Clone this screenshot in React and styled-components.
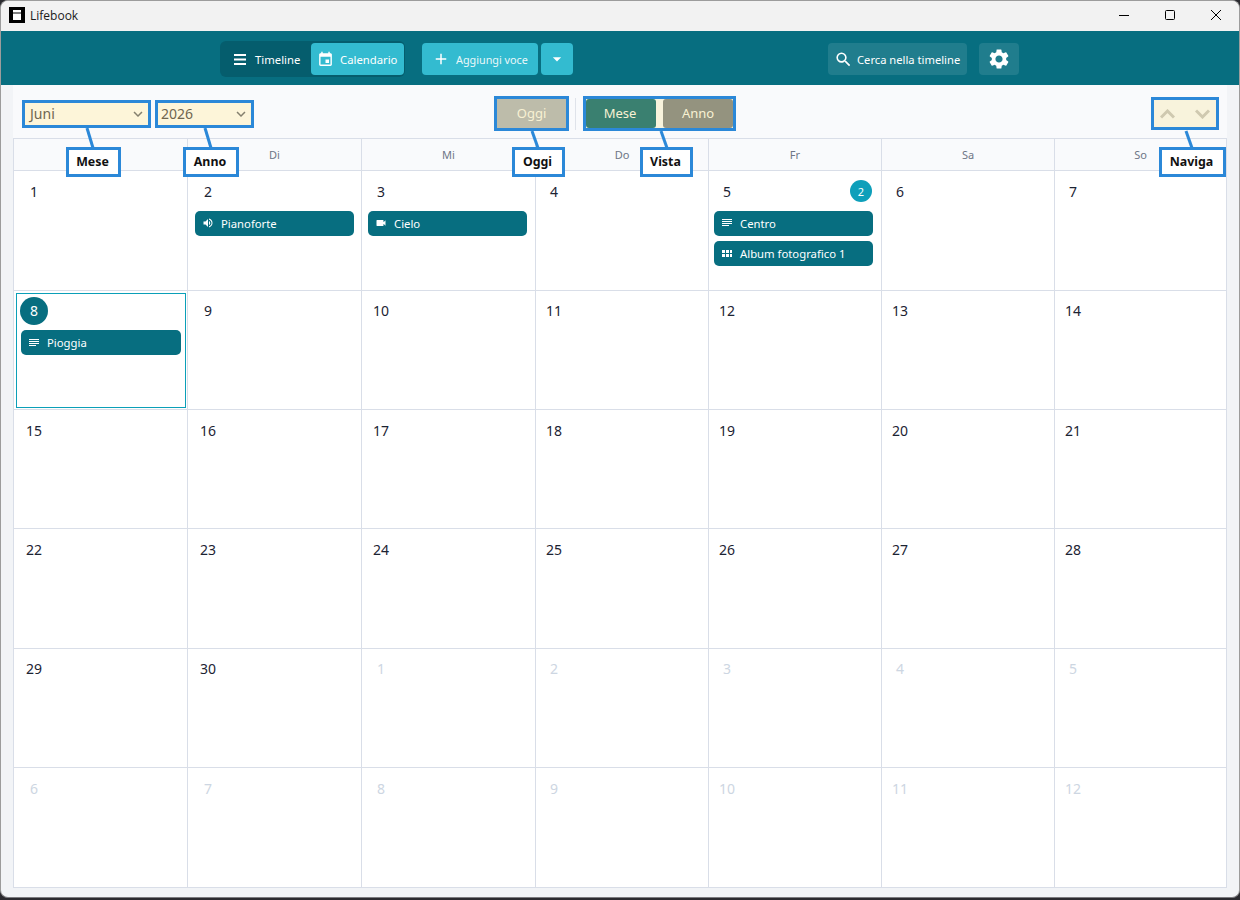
import React from "react";
import styled, { createGlobalStyle, css } from "styled-components";
import {
  MdEvent, MdAdd, MdArrowDropDown, MdSearch, MdSettings, MdVolumeUp,
  MdVideocam, MdExpandMore,
} from "react-icons/md";

const Global = createGlobalStyle`
  html, body { margin: 0; padding: 0; background: #2b2b30; }
  * { box-sizing: border-box; }
  body { font-family: "Noto Sans", "Open Sans", sans-serif; }
`;

const Window = styled.div`
  position: relative;
  width: 1240px;
  height: 898px;
  display: flex;
  flex-direction: column;
  overflow: hidden;
  border: 1px solid #9c9c9c;
  border-bottom-color: #7c7c80;
  border-radius: 8px;
  background: #f2f4f7;
`;

const TitleBar = styled.div`
  height: 30px;
  flex: none;
  display: flex;
  align-items: center;
  background: #f2f2f2;
  padding: 0 0 2px 8px;
`;
const AppLogo = styled.svg`
  width: 16px;
  height: 16px;
  margin-right: 5px;
  flex: none;
`;
const AppName = styled.span`
  font: 12px "Open Sans", sans-serif;
  color: #1a1a1a;
`;
const WinControls = styled.div`
  margin-left: auto;
  display: flex;
`;
const WinButton = styled.div`
  width: 46px;
  height: 28px;
  display: flex;
  align-items: center;
  justify-content: center;
  svg { width: 10px; height: 10px; }
`;

const Header = styled.header`
  height: 54px;
  flex: none;
  background: #076e80;
  padding: 2px 220px 0 219px;
  display: flex;
  align-items: center;
  justify-content: space-between;
`;
const Cluster = styled.div`
  display: flex;
  align-items: center;
`;
const NavGroup = styled.div`
  height: 36px;
  width: 185px;
  padding: 2px 1px 2px 3px;
  background: #055d6d;
  border-radius: 6px;
  display: flex;
  margin-right: 17px;
`;
const HeadButton = styled.div`
  height: 32px;
  border-radius: 4px;
  display: flex;
  align-items: center;
  color: #fff;
  font-size: ${(p) => p.$fs || 11.3}px;
  white-space: nowrap;
  ${(p) => p.$w && css`width: ${p.$w}px;`}
  padding-left: ${(p) => p.$pl || 0}px;
  gap: ${(p) => p.$gap || 0}px;
  background: ${(p) => (p.$kind === "accent" ? "#33bbd0" : p.$kind === "soft" ? "#207d8d" : "transparent")};
  justify-content: ${(p) => (p.$center ? "center" : "flex-start")};
  margin-left: ${(p) => p.$ml || 0}px;
`;
const AddLabel = styled.span`
  opacity: 0.9;
`;
const BarsIcon = styled.svg`
  width: 12px;
  height: 11px;
  flex: none;
`;

const Main = styled.main`
  flex: 1;
  min-height: 0;
  padding: 0 12px 9.3px;
  display: flex;
  flex-direction: column;
`;
const Toolbar = styled.div`
  height: 53px;
  flex: none;
  background: #f9fafc;
  display: flex;
  align-items: flex-start;
  padding: 14px 11px 0 12px;
`;
const Marked = css`
  outline: 3px solid #2b88d8;
  outline-offset: 0;
`;
const SelectBox = styled.div`
  ${Marked}
  height: 22px;
  margin-top: 4px;
  width: ${(p) => p.$w}px;
  background: #fdf5d9;
  color: #6f6550;
  font-size: 14px;
  padding: 0 1px 2px ${(p) => p.$pl}px;
  display: flex;
  align-items: center;
  justify-content: space-between;
  margin-right: ${(p) => p.$mr || 0}px;
  svg { color: #85806e; margin-top: 2px; }
`;
const TodayButton = styled.div`
  ${Marked}
  width: 69px;
  height: 29px;
  margin-left: 246px;
  padding-bottom: 2px;
  background: #bdbcaa;
  color: #f8f1d3;
  font-size: 13px;
  display: flex;
  align-items: center;
  justify-content: center;
`;
const Divider = styled.div`
  width: 1px;
  height: 32px;
  background: #dfe3ea;
  margin: -1px 10px 0 9px;
`;
const ViewSwitch = styled.div`
  ${Marked}
  width: 147px;
  height: 29px;
  display: flex;
  justify-content: space-between;
  background: #f8f3dc;
`;
const ViewButton = styled.div`
  width: 70px;
  padding-bottom: 2px;
  padding-right: ${(p) => (p.$active ? 2 : 0)}px;
  display: flex;
  align-items: center;
  justify-content: center;
  font-size: 13px;
  color: #f8f1d3;
  border-radius: 3px;
  background: ${(p) => (p.$active ? "#3a8070" : "#94937f")};
`;
const NavArrows = styled.div`
  ${Marked}
  margin-left: auto;
  width: 62px;
  height: 27px;
  margin-top: 1px;
  background: #f8f3dc;
  color: #cfc9b0;
  display: flex;
  align-items: center;
  justify-content: space-between;
  padding: 0 6px;
`;
const Chevron = styled.svg`
  width: 15px;
  height: 10px;
  fill: none;
  stroke: currentColor;
  stroke-width: 3;
`;

const columns = "174px 174px 174px 173px 173px 173px 172px";

const Calendar = styled.div`
  flex: 1;
  min-height: 0;
  background: #fff;
  display: flex;
  flex-direction: column;
  border-left: 1px solid #d9dee8;
  border-top: 1px solid #d9dee8;
`;
const HeadRow = styled.div`
  height: 32.3px;
  flex: none;
  display: grid;
  grid-template-columns: ${columns};
  background: #f9fafc;
`;
const HeadCell = styled.div`
  display: flex;
  align-items: center;
  justify-content: center;
  font-size: 11px;
  color: #6e7686;
  border-right: 1px solid #d9dee8;
  border-bottom: 1px solid #d9dee8;
`;
const Weeks = styled.div`
  flex: 1;
  min-height: 0;
  display: grid;
  grid-template-columns: ${columns};
  grid-template-rows: repeat(6, 1fr);
`;
const Day = styled.div`
  min-width: 0;
  border-right: 1px solid #d9dee8;
  border-bottom: 1px solid #d9dee8;
  padding: 6px 0 0 ${(p) => p.$inset}px;
  ${(p) => p.$today && css`
    outline: 1px solid #0b9fb8;
    outline-offset: -3px;
  `}
`;
const DayTop = styled.div`
  width: 159px;
  height: 28px;
  display: flex;
  justify-content: space-between;
  align-items: center;
  margin-bottom: 5.6px;
`;
const DayNum = styled.div`
  width: 28px;
  height: 28px;
  border-radius: 50%;
  display: flex;
  align-items: center;
  justify-content: center;
  font-size: 14px;
  color: ${(p) => (p.$muted ? "#cdd6e2" : p.$today ? "#fff" : "#1c2333")};
  background: ${(p) => (p.$today ? "#076e80" : "transparent")};
`;
const CountBadge = styled.div`
  width: 22px;
  height: 22px;
  border-radius: 50%;
  background: #0e9fba;
  color: #fff;
  font-size: 11px;
  display: flex;
  align-items: center;
  justify-content: center;
`;
const EventChip = styled.div`
  height: 25px;
  width: ${(p) => (p.$today ? 160 : 159)}px;
  margin: 0 0 5px 1px;
  padding-left: 7px;
  border-radius: 5px;
  background: #076e80;
  color: #fff;
  font-size: 11.3px;
  display: flex;
  align-items: center;
  gap: 7px;
  white-space: nowrap;
  svg { flex: none; }
`;
const ChipIcon = styled.svg`
  width: 12px;
  height: 12px;
  fill: currentColor;
  shape-rendering: crispEdges;
`;

const Callout = styled.div`
  position: absolute;
  top: 146px;
  left: ${(p) => p.$x}px;
  width: ${(p) => p.$w}px;
  height: 30px;
  padding: 0 2px 1px 0;
  background: #fff;
  border: 3px solid #2b88d8;
  font-size: 12.4px;
  font-weight: 700;
  color: #111;
  display: flex;
  align-items: center;
  justify-content: center;
`;
const Leaders = styled.svg`
  position: absolute;
  left: 0;
  top: 0;
  width: 1240px;
  height: 200px;
  pointer-events: none;
`;

const SubjectIcon = () => (
  <ChipIcon viewBox="0 0 12 12">
    <path d="M1 2h10v1H1zM1 4h10v1H1zM1 6h10v1H1zM1 8h7v1H1z" />
  </ChipIcon>
);
const AlbumIcon = () => (
  <ChipIcon viewBox="0 0 12 12">
    <path d="M1 2.5h3v3H1zM5 2.5h3v3H5zM9 2.5h2v3H9zM1 6.5h3v3H1zM5 6.5h3v3H5zM9 6.5h2v3H9z" />
  </ChipIcon>
);
const VolumeIcon = () => <MdVolumeUp size={12} />;
const VideoIcon = () => <MdVideocam size={12} />;

const chips = {
  2: [[VolumeIcon, "Pianoforte"]],
  3: [[VideoIcon, "Cielo"]],
  5: [[SubjectIcon, "Centro"], [AlbumIcon, "Album fotografico 1"]],
  8: [[SubjectIcon, "Pioggia"]],
};
const insets = [6, 6, 5, 4, 4, 4, 4];
const weekdays = ["", "Di", "Mi", "Do", "Fr", "Sa", "So"];
const days = [
  ...Array.from({ length: 30 }, (_, i) => ({ n: i + 1 })),
  ...[1, 2, 3, 4, 5, 6, 7, 8, 9, 10, 11, 12].map((n) => ({ n, muted: true })),
];
const callouts = [
  ["Mese", 65, 55],
  ["Anno", 182, 56],
  ["Oggi", 511, 53],
  ["Vista", 639, 53],
  ["Naviga", 1158, 67],
];
const leaders = [
  [86, 127, 92, 147],
  [204, 127, 210, 147],
  [531, 130, 537, 147],
  [660, 130, 666, 147],
  [1185, 130, 1191, 147],
];

export default function App() {
  return (
    <>
      <Global />
      <Window>
        <TitleBar>
          <AppLogo viewBox="0 0 16 16">
            <rect width="16" height="16" fill="#000" />
            <path d="M4 3h8v2.5H4zM4 6.5h8v6.5H4z" fill="#fff" />
          </AppLogo>
          <AppName>Lifebook</AppName>
          <WinControls>
            <WinButton>
              <svg viewBox="0 0 10 10"><path d="M0 5.5h10" stroke="#000" strokeWidth="1" /></svg>
            </WinButton>
            <WinButton>
              <svg viewBox="0 0 10 10"><rect x=".5" y=".5" width="9" height="9" rx="1" fill="none" stroke="#000" /></svg>
            </WinButton>
            <WinButton>
              <svg viewBox="0 0 10 10"><path d="M0 0l10 10M10 0L0 10" stroke="#000" strokeWidth="1" /></svg>
            </WinButton>
          </WinControls>
        </TitleBar>

        <Header>
          <Cluster>
            <NavGroup>
              <HeadButton $w={88} $pl={11} $gap={9}>
                <BarsIcon viewBox="0 0 12 11"><path d="M0 0h12v2H0zM0 4.5h12v2H0zM0 9h12v2H0z" fill="#fff" /></BarsIcon>
                Timeline
              </HeadButton>
              <HeadButton $kind="accent" $w={93} $pl={6} $gap={6}><MdEvent size={17} />Calendario</HeadButton>
            </NavGroup>
            <HeadButton $kind="accent" $w={116} $pl={10} $gap={6} $fs={10.8}><MdAdd size={18} /><AddLabel>Aggiungi voce</AddLabel></HeadButton>
            <HeadButton $kind="accent" $w={32} $ml={3} $center><MdArrowDropDown size={20} /></HeadButton>
          </Cluster>
          <Cluster>
            <HeadButton $kind="soft" $w={139} $pl={6} $gap={4} $fs={11.2}><MdSearch size={19} />Cerca nella timeline</HeadButton>
            <HeadButton $kind="soft" $w={40} $ml={12} $center><MdSettings size={24} /></HeadButton>
          </Cluster>
        </Header>

        <Main>
          <Toolbar>
            <SelectBox $w={123} $mr={10} $pl={5}>Juni<MdExpandMore size={18} /></SelectBox>
            <SelectBox $w={93} $pl={3}>2026<MdExpandMore size={18} /></SelectBox>
            <TodayButton>Oggi</TodayButton>
            <Divider />
            <ViewSwitch>
              <ViewButton $active>Mese</ViewButton>
              <ViewButton>Anno</ViewButton>
            </ViewSwitch>
            <NavArrows>
              <Chevron viewBox="0 0 15 10"><path d="M1 8.5l6.5-6.5 6.5 6.5" /></Chevron>
              <Chevron viewBox="0 0 15 10"><path d="M1 1.5l6.5 6.5 6.5-6.5" /></Chevron>
            </NavArrows>
          </Toolbar>

          <Calendar>
            <HeadRow>
              {weekdays.map((d, i) => <HeadCell key={i}>{d}</HeadCell>)}
            </HeadRow>
            <Weeks>
              {days.map((d, i) => {
                const today = !d.muted && d.n === 8;
                const list = (!d.muted && chips[d.n]) || [];
                return (
                  <Day key={i} $today={today} $inset={insets[i % 7]}>
                    <DayTop>
                      <DayNum $muted={d.muted} $today={today}>{d.n}</DayNum>
                      {!d.muted && d.n === 5 && <CountBadge>2</CountBadge>}
                    </DayTop>
                    {list.map(([Icon, label]) => (
                      <EventChip key={label} $today={today}><Icon />{label}</EventChip>
                    ))}
                  </Day>
                );
              })}
            </Weeks>
          </Calendar>
        </Main>

        <Leaders viewBox="0 0 1240 200">
          {leaders.map(([x1, y1, x2, y2]) => (
            <line key={x1} x1={x1} y1={y1} x2={x2} y2={y2} stroke="#2b88d8" strokeWidth="3" />
          ))}
        </Leaders>
        {callouts.map(([t, x, w]) => <Callout key={t} $x={x} $w={w}>{t}</Callout>)}
      </Window>
    </>
  );
}
